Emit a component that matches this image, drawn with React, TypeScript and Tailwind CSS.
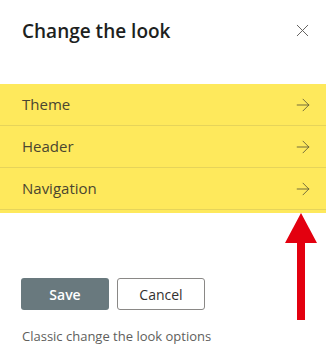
import { X, ArrowRight } from 'lucide-react';

const items = ['Theme', 'Header', 'Navigation'];

export default function App() {
  return (
    <div
      className="relative flex h-[347px] w-[326px] flex-col overflow-hidden bg-white text-[#323130]"
      style={{ fontFamily: '"Open Sans", "Noto Sans", sans-serif' }}
    >
      {/* Panel header */}
      <div className="flex h-[84px] items-start justify-between pl-[22px] pr-[13px] pt-[17px]">
        <h1 className="text-[19px] font-semibold leading-[28px] text-[#201f1e]">Change the look</h1>
        <button className="mt-[3px] text-[#605e5c]">
          <X className="h-[21px] w-[21px]" strokeWidth={1.1} />
        </button>
      </div>

      {/* Options */}
      <div className="bg-[#fee95c] pb-[3px]">
        {items.map((item) => (
          <div
            key={item}
            className="flex h-[42px] items-center justify-between border-b border-[#e6d45a] pl-[22px] pr-[13px]"
          >
            <span className="text-[15px] text-[#4a4630]">{item}</span>
            <ArrowRight className="h-[20px] w-[20px] text-[#5a5536]" strokeWidth={1} />
          </div>
        ))}
      </div>

      {/* Actions */}
      <div className="mt-[65px] flex gap-[8px] pl-[21px]">
        <button className="h-[32px] w-[88px] rounded-[3px] bg-[#69797e] text-[14px] font-semibold text-white">
          Save
        </button>
        <button className="h-[32px] w-[88px] rounded-[3px] border border-[#8a8886] bg-white text-[14px] font-medium text-[#323130]">
          Cancel
        </button>
      </div>
      <p className="mt-[17px] pl-[22px] text-[13px] leading-[18px] text-[#605e5c]">Classic change the look options</p>

      {/* Callout arrow */}
      <svg className="absolute left-[284px] top-[211px]" width="36" height="112" viewBox="0 0 36 112">
        <polygon points="17,2 33,32 1,32" fill="#e3000f" />
        <rect x="13" y="31" width="8" height="78" fill="#e3000f" />
      </svg>
    </div>
  );
}
